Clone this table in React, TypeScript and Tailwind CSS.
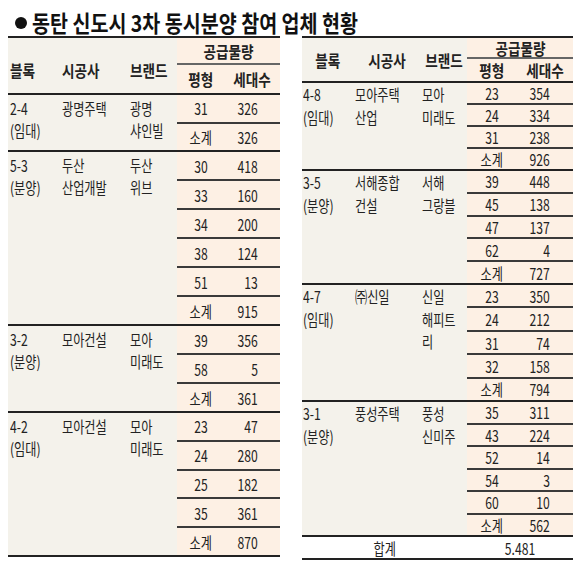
import React from 'react';

type Row = [string, string];
type Group = { block: string[]; co: string[]; br: string[]; rows: Row[]; h: string };

const leftGroups: Group[] = [
  { block: ['2-4', '(임대)'], co: ['광명주택'], br: ['광명', '샤인빌'], rows: [['31', '326'], ['소계', '326']], h: 'h-[57px]' },
  {
    block: ['5-3', '(분양)'], co: ['두산', '산업개발'], br: ['두산', '위브'],
    rows: [['30', '418'], ['33', '160'], ['34', '200'], ['38', '124'], ['51', '13'], ['소계', '915']], h: 'h-[174px]',
  },
  { block: ['3-2', '(분양)'], co: ['모아건설'], br: ['모아', '미래도'], rows: [['39', '356'], ['58', '5'], ['소계', '361']], h: 'h-[87px]' },
  {
    block: ['4-2', '(임대)'], co: ['모아건설'], br: ['모아', '미래도'],
    rows: [['23', '47'], ['24', '280'], ['25', '182'], ['35', '361'], ['소계', '870']], h: 'h-[144px]',
  },
];

const rightGroups: Group[] = [
  {
    block: ['4-8', '(임대)'], co: ['모아주택', '산업'], br: ['모아', '미래도'],
    rows: [['23', '354'], ['24', '334'], ['31', '238'], ['소계', '926']], h: 'h-[88px]',
  },
  {
    block: ['3-5', '(분양)'], co: ['서해종합', '건설'], br: ['서해', '그랑블'],
    rows: [['39', '448'], ['45', '138'], ['47', '137'], ['62', '4'], ['소계', '727']], h: 'h-[114px]',
  },
  {
    block: ['4-7', '(임대)'], co: ['㈜신일'], br: ['신일', '해피트', '리'],
    rows: [['23', '350'], ['24', '212'], ['31', '74'], ['32', '158'], ['소계', '794']], h: 'h-[117px]',
  },
  {
    block: ['3-1', '(분양)'], co: ['풍성주택'], br: ['풍성', '신미주'],
    rows: [['35', '311'], ['43', '224'], ['52', '14'], ['54', '3'], ['60', '10'], ['소계', '562']], h: 'h-[135px]',
  },
];

function Sc({ children, origin }: { children: React.ReactNode; origin: string }) {
  return <span className={`inline-block whitespace-nowrap scale-x-[0.76] ${origin}`}>{children}</span>;
}

function Hd({ children, origin }: { children: React.ReactNode; origin: string }) {
  return <span className={`inline-block whitespace-nowrap font-bold scale-x-[0.85] ${origin}`}>{children}</span>;
}

function Lines({ lines }: { lines: string[] }) {
  return (
    <>
      {lines.map((l, i) => (
        <div key={i}>
          <Sc origin="origin-left">{l}</Sc>
        </div>
      ))}
    </>
  );
}

type Layout = {
  width: string;
  leftW: string;
  c1: string;
  c2: string;
  c3: string;
  p: string;
  p2pr: string;
  lh: string;
  pt: string;
  headH: string;
  topH: string;
  headLeft: string;
  headCell: string;
};

function Table({ groups, L, total }: { groups: Group[]; L: Layout; total?: boolean }) {
  const ho = L.headCell.includes('center') ? 'origin-center' : 'origin-left';
  return (
    <div className={`${L.width} border-t-2 border-[#222]`}>
      <div className={`flex ${L.headH} border-b-2 border-[#222] text-[16px] leading-[20px]`}>
        <div className={`flex ${L.leftW} bg-[#f4f2eb] ${L.headLeft}`}>
          <div className={`${L.c1} ${L.headCell}`}>
            <Hd origin={ho}>블록</Hd>
          </div>
          <div className={`${L.c2} ${L.headCell}`}>
            <Hd origin={ho}>시공사</Hd>
          </div>
          <div className={`${L.c3} ${L.headCell}`}>
            <Hd origin={ho}>브랜드</Hd>
          </div>
        </div>
        <div className="flex flex-1 flex-col bg-[#fdf0e4]">
          <div className={`flex ${L.topH} items-center justify-center border-b-2 border-[#666]`}>
            <Hd origin="origin-center">공급물량</Hd>
          </div>
          <div className="flex flex-1 items-center">
            <div className={`${L.p} text-center`}>
              <Hd origin="origin-center">평형</Hd>
            </div>
            <div className="flex-1 text-center">
              <Hd origin="origin-center">세대수</Hd>
            </div>
          </div>
        </div>
      </div>
      {groups.map((g, gi) => (
        <div key={gi} className={`flex ${g.h} border-b-2 border-[#222] text-[16px] text-[#222]`}>
          <div className={`flex ${L.leftW} bg-[#f4f2eb] ${L.lh} ${L.pt}`}>
            <div className={L.c1}>
              <Lines lines={g.block} />
            </div>
            <div className={L.c2}>
              <Lines lines={g.co} />
            </div>
            <div className={L.c3}>
              <Lines lines={g.br} />
            </div>
          </div>
          <div className="flex flex-1 flex-col bg-[#fdf0e4]">
            {g.rows.map((r, ri) => (
              <div
                key={ri}
                className={`flex flex-1 items-center leading-[20px] ${ri < g.rows.length - 1 ? 'border-b-2 border-[#3a3a3a]' : ''}`}
              >
                <div className={`${L.p} text-center`}>
                  <Sc origin="origin-center">{r[0]}</Sc>
                </div>
                <div className={`flex-1 text-right ${L.p2pr}`}>
                  <Sc origin="origin-right">{r[1]}</Sc>
                </div>
              </div>
            ))}
          </div>
        </div>
      ))}
      {total && (
        <div className="flex h-[23px] items-center border-b-2 border-[#222] bg-white text-[16px] leading-[20px] text-[#222]">
          <div className={`${L.leftW} text-center`}>
            <Sc origin="origin-center">합계</Sc>
          </div>
          <div className="flex-1 text-center">
            <Sc origin="origin-center">5.481</Sc>
          </div>
        </div>
      )}
    </div>
  );
}

const leftLayout: Layout = {
  width: 'w-[272px]',
  leftW: 'w-[169px]',
  c1: 'w-[52px] pl-[2px]',
  c2: 'w-[68px] pl-[2px]',
  c3: 'w-[49px] pl-[2px]',
  p: 'w-[48px]',
  p2pr: 'pr-[22px]',
  lh: 'leading-[22px]',
  pt: 'pt-[2px]',
  headH: 'h-[57px]',
  topH: 'h-[27px]',
  headLeft: 'items-center pt-[8px]',
  headCell: 'text-left',
};

const rightLayout: Layout = {
  width: 'w-[271px]',
  leftW: 'w-[165px]',
  c1: 'w-[51px] pl-[1px]',
  c2: 'w-[67px] pl-[2px]',
  c3: 'w-[47px] pl-[2px]',
  p: 'w-[50px]',
  p2pr: 'pr-[23px]',
  lh: 'leading-[22.5px]',
  pt: 'pt-[0px]',
  headH: 'h-[45px]',
  topH: 'h-[21px]',
  headLeft: 'items-center',
  headCell: 'text-center',
};

export default function App() {
  return (
    <div className="h-[568px] w-[580px] overflow-hidden bg-white font-['Noto_Sans_CJK_KR','Noto_Sans',sans-serif] text-[#222]">
      <div className="flex h-[36px] items-center pl-[15px] pt-[9px]">
        <span className="h-3 w-3 shrink-0 rounded-full bg-[#111]" />
        <span className="ml-[5px] inline-block origin-left scale-x-[0.85] whitespace-nowrap text-[23px] font-bold leading-none text-[#111]">
          동탄 신도시 3차 동시분양 참여 업체 현황
        </span>
      </div>
      <div className="flex items-start pl-[8px]">
        <Table groups={leftGroups} L={leftLayout} />
        <div className="w-[22px] shrink-0" />
        <Table groups={rightGroups} L={rightLayout} total />
      </div>
    </div>
  );
}
